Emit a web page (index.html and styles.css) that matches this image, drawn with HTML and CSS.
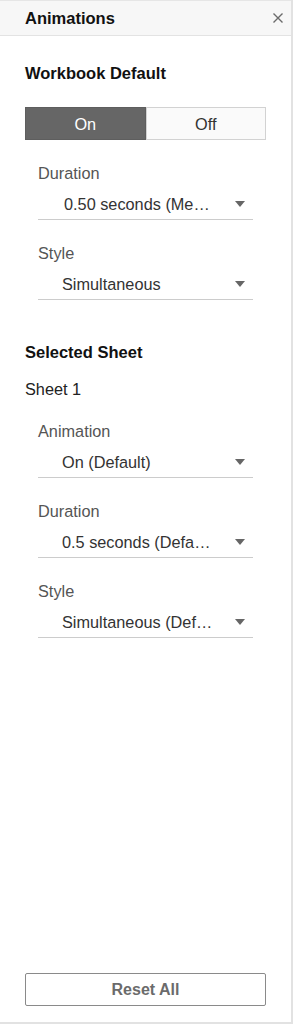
FILE: index.html
```html
<!DOCTYPE html>
<html>
<head>
<meta charset="utf-8">
<link rel="stylesheet" href="styles.css">
</head>
<body>
<div class="panel">
  <div class="header">
    <span class="title">Animations</span>
    <svg class="close" width="10" height="10" viewBox="0 0 10 10"><path d="M0.5 0.5 L9.5 9.5 M9.5 0.5 L0.5 9.5" stroke="#6b6b6b" stroke-width="1.4" fill="none"/></svg>
  </div>
  <div class="content">
    <div class="heading first">Workbook Default</div>
    <div class="toggle">
      <div class="seg on">On</div>
      <div class="seg off">Off</div>
    </div>
    <div class="field">
      <div class="label">Duration</div>
      <div class="select"><span class="value shift">0.50 seconds (Me…</span><span class="arrow"></span></div>
    </div>
    <div class="field">
      <div class="label">Style</div>
      <div class="select"><span class="value">Simultaneous</span><span class="arrow"></span></div>
    </div>
    <div class="heading second">Selected Sheet</div>
    <div class="sheet">Sheet 1</div>
    <div class="field">
      <div class="label">Animation</div>
      <div class="select"><span class="value">On (Default)</span><span class="arrow"></span></div>
    </div>
    <div class="field">
      <div class="label">Duration</div>
      <div class="select"><span class="value">0.5 seconds (Defa…</span><span class="arrow"></span></div>
    </div>
    <div class="field">
      <div class="label">Style</div>
      <div class="select"><span class="value">Simultaneous (Def…</span><span class="arrow"></span></div>
    </div>
  </div>
  <div class="footer">
    <button class="reset">Reset All</button>
  </div>
</div>
</body>
</html>
```
FILE: styles.css
```css
html, body {
  margin: 0;
  padding: 0;
  background: #ffffff;
}
body {
  font-family: "Liberation Sans", Arial, sans-serif;
  font-size: 16.3px;
  line-height: 18px;
  color: #333333;
}
.panel {
  width: 293px;
  height: 1024px;
  box-sizing: border-box;
  border-right: 2px solid #e2e2e2;
  border-bottom: 2px solid #e2e2e2;
  display: flex;
  flex-direction: column;
  background: #ffffff;
}
.header {
  height: 36px;
  box-sizing: border-box;
  border-top: 1px solid #e6e6e6;
  border-bottom: 1px solid #e3e3e3;
  background: #f7f7f7;
  display: flex;
  align-items: center;
  justify-content: space-between;
  padding: 0 8px 0 25px;
}
.title {
  font-weight: bold;
  font-size: 16.5px;
  color: #111111;
}
.close {
  display: block;
}
.content {
  flex: 1;
  padding: 0 0 0 25px;
}
.heading {
  font-weight: bold;
  font-size: 16.5px;
  color: #111111;
}
.heading.first {
  margin-top: 28px;
}
.heading.second {
  margin-top: 43px;
}
.toggle {
  margin-top: 25px;
  width: 241px;
  height: 33px;
  display: flex;
  box-sizing: border-box;
}
.seg {
  flex: 1;
  display: flex;
  align-items: center;
  justify-content: center;
  box-sizing: border-box;
}
.seg.on {
  background: #666666;
  color: #ffffff;
  border: 1px solid #5e5e5e;
}
.seg.off {
  background: #fafafa;
  color: #333333;
  border: 1px solid #d2d2d2;
}
.sheet {
  margin-top: 19px;
  color: #222222;
}
.field {
  margin-left: 13px;
  width: 215px;
  margin-top: 24px;
}
.label {
  color: #555555;
}
.select {
  margin-top: 13px;
  padding: 0 8px 6px 24px;
  border-bottom: 1px solid #cccccc;
  display: flex;
  align-items: center;
  justify-content: space-between;
}
.value {
  color: #333333;
  white-space: nowrap;
}
.value.shift {
  padding-left: 2px;
}
.arrow {
  width: 0;
  height: 0;
  border-left: 5px solid transparent;
  border-right: 5px solid transparent;
  border-top: 6px solid #666666;
}
.footer {
  padding: 0 0 16px 25px;
}
.reset {
  width: 241px;
  height: 33px;
  box-sizing: border-box;
  border: 1.5px solid #8a8a8a;
  border-radius: 2px;
  background: #ffffff;
  font-family: "Liberation Sans", Arial, sans-serif;
  font-size: 16px;
  font-weight: bold;
  color: #6b6b6b;
  padding: 0;
  display: block;
}
```
